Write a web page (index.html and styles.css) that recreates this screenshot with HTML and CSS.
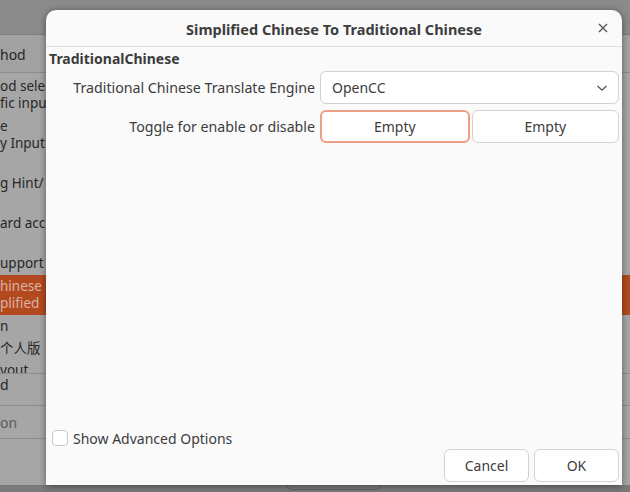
FILE: index.html
```html
<!DOCTYPE html>
<html>
<head>
<meta charset="utf-8">
<link rel="stylesheet" href="styles.css">
</head>
<body>
<div class="bg-window">
  <div class="bg-header"></div>
  <div class="bg-colhead"><span>hod</span></div>
  <div class="bg-list">
    <div class="bg-row"><span>od selec</span><span>fic inpu</span></div>
    <div class="bg-row"><span>e</span><span>y Input</span></div>
    <div class="bg-row"><span>&nbsp;</span><span>g Hint/</span></div>
    <div class="bg-row"><span>&nbsp;</span><span>ard acc</span></div>
    <div class="bg-row"><span>&nbsp;</span><span>upport</span></div>
    <div class="bg-row selected"><span>hinese</span><span>plified</span></div>
    <div class="bg-row top cjk-row"><span>n</span><span class="cjk">个人版</span></div>
    <div class="bg-row top last"><span>yout</span></div>
  </div>
  <div class="bg-item first"><span>d</span></div>
  <div class="bg-item"><span>on</span></div>
  <div class="bg-fill"></div>
  <div class="bg-bottom"><div class="bg-btn"></div></div>
</div>

<div class="dialog">
  <div class="titlebar">
    <span class="title">Simplified Chinese To Traditional Chinese</span>
    <span class="close">
      <svg width="10" height="10" viewBox="0 0 10 10"><path d="M1 1L9 9M9 1L1 9" stroke="#555" stroke-width="1.4" fill="none"/></svg>
    </span>
  </div>
  <div class="content">
    <div class="group-title">TraditionalChinese</div>
    <div class="form">
      <div class="label">Traditional Chinese Translate Engine</div>
      <div class="combo">
        <span>OpenCC</span>
        <svg width="12" height="8" viewBox="0 0 12 8"><path d="M1.5 2L6 6.2L10.5 2" stroke="#555" stroke-width="1.3" fill="none"/></svg>
      </div>
      <div class="label">Toggle for enable or disable</div>
      <div class="keys">
        <div class="btn focused">Empty</div>
        <div class="btn">Empty</div>
      </div>
    </div>
    <div class="spacer"></div>
    <label class="check-row"><span class="checkbox"></span><span>Show Advanced Options</span></label>
    <div class="actions">
      <div class="btn action">Cancel</div>
      <div class="btn action">OK</div>
    </div>
  </div>
</div>
</body>
</html>
```

FILE: styles.css
```css
* { box-sizing: border-box; }
html, body { margin: 0; padding: 0; }
body {
  width: 630px;
  height: 492px;
  overflow: hidden;
  font-family: "Noto Sans", "Noto Sans CJK SC", sans-serif;
  font-size: 14px;
  color: #3c3c3c;
  position: relative;
}
.bg-window {
  width: 630px;
  height: 492px;
  background: #a6a6a6;
  display: flex;
  flex-direction: column;
  color: #262626;
}
.bg-header {
  height: 35px;
  flex: none;
  background: #8b8b8b;
  border-bottom: 1px solid #7d7d7d;
}
.bg-colhead {
  height: 38px;
  flex: none;
  border-bottom: 1px solid #8d8d8d;
  display: flex;
  align-items: center;
  padding-top: 2px;
  background: #a2a2a2;
}
.bg-list {
  height: 301px;
  flex: none;
  overflow: hidden;
  padding-top: 2px;
  border-bottom: 1px solid #8d8d8d;
}
.bg-row {
  height: 40px;
  display: flex;
  flex-direction: column;
  justify-content: center;
  font-size: 13.5px;
  line-height: 17px;
  white-space: nowrap;
}
.bg-row.top { justify-content: flex-start; }
.bg-row.cjk-row { padding-top: 3px; }
.bg-row.last { padding-top: 7px; }
.bg-row .cjk {
  font-family: "Noto Sans CJK SC", sans-serif;
  line-height: 22px;
  margin-top: 1px;
}
.bg-row.selected {
  background: #b3491f;
  color: #d8b4a4;
}
.bg-item {
  height: 33px;
  flex: none;
  border-bottom: 1px solid #8d8d8d;
  display: flex;
  align-items: center;
}
.bg-item.first { height: 32px; align-items: flex-start; padding-top: 1px; }
.bg-item:not(.first) { color: #5b5b5b; padding-top: 1px; }
.bg-fill { flex: 1; }
.bg-bottom {
  height: 7px;
  flex: none;
  background: #7a7a7a;
  padding-left: 287px;
}
.bg-btn {
  width: 94px;
  height: 5px;
  border: 1px solid #5f5f5f;
  border-top: none;
  border-radius: 0 0 6px 6px;
}

.dialog {
  position: absolute;
  left: 46px;
  top: 10px;
  width: 576px;
  height: 475px;
  background: #fafafa;
  border-radius: 10px 10px 0 0;
  box-shadow: 0 1px 7px rgba(0,0,0,0.45);
  display: flex;
  flex-direction: column;
}
.titlebar {
  height: 37px;
  flex: none;
  border-bottom: 1px solid #dcdcdc;
  display: flex;
  align-items: center;
  justify-content: center;
  position: relative;
}
.title {
  font-weight: bold;
  font-size: 14.5px;
  color: #3d3d3d;
  padding-top: 2px;
}
.close {
  position: absolute;
  right: 14px;
  top: 13px;
  display: flex;
}
.content {
  flex: 1;
  display: flex;
  flex-direction: column;
  padding: 3px 3px 3px 3px;
}
.group-title {
  font-weight: bold;
  line-height: 18px;
  margin-bottom: 3px;
}
.form {
  display: grid;
  grid-template-columns: 266px 299px;
  column-gap: 5px;
  row-gap: 6px;
  align-items: center;
}
.label {
  text-align: right;
  white-space: nowrap;
  font-size: 14.2px;
}
.combo {
  height: 33px;
  background: #fff;
  border: 1px solid #d2d2d2;
  border-radius: 6px;
  display: flex;
  align-items: center;
  justify-content: space-between;
  padding: 0 10px 0 11px;
}
.keys {
  display: flex;
  gap: 2px;
}
.btn {
  height: 33px;
  background: #fff;
  border: 1px solid #d2d2d2;
  border-radius: 6px;
  display: flex;
  align-items: center;
  justify-content: center;
}
.keys .btn { flex: 1; }
.btn.focused { border: 2px solid #eb9f87; }
.spacer { flex: 1; }
.check-row {
  display: flex;
  align-items: center;
  gap: 5px;
  padding-left: 3px;
  height: 20px;
  margin-bottom: 1px;
}
.checkbox {
  width: 16px;
  height: 16px;
  border: 1px solid #c8c8c8;
  border-radius: 4px;
  background: #fff;
}
.actions {
  display: flex;
  justify-content: flex-end;
  gap: 5px;
}
.btn.action { width: 85px; }
```
